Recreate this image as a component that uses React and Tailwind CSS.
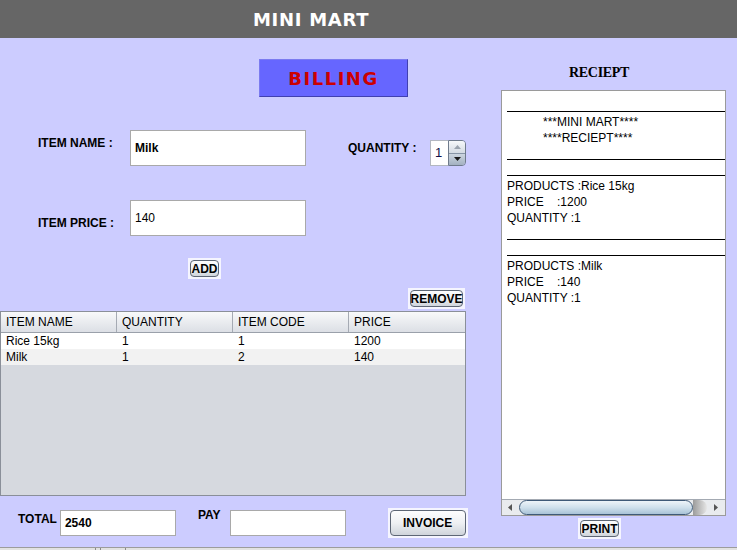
import React from 'react';

const FONT = "font-['Liberation_Sans',Arial,sans-serif]";

const ITEMS = [
  { name: 'Rice 15kg', qty: 1, code: 1, price: 1200 },
  { name: 'Milk', qty: 1, code: 2, price: 140 },
];

function SwingButton({ label, className = '' }) {
  return (
    <div className={`bg-white/80 p-[2px] ${className}`}>
      <button className="w-full h-full rounded-[4px] border border-[#5d6675] bg-linear-to-b from-[#fdfdfe] via-[#eef0f3] to-[#cfd4db] text-[12px] font-bold text-black leading-none flex items-center justify-center">
        {label}
      </button>
    </div>
  );
}

function Label({ children, className = '' }) {
  return <div className={`text-[12px] font-bold text-black leading-[14px] whitespace-nowrap ${className}`}>{children}</div>;
}

function Spinner() {
  return (
    <div className="flex h-[26px] mt-[10px]">
      <div className="w-[18px] bg-white border border-[#b3b8c1] border-r-0 text-[13px] text-[#10104a] flex items-center pl-[4px]">1</div>
      <div className="w-[18px] flex flex-col rounded-r-[4px] border border-[#6f7b8c] overflow-hidden">
        <div className="flex-1 bg-linear-to-b from-[#f6f8fa] to-[#d4dbe3] border-b border-[#8795a6] flex items-center justify-center">
          <svg width="7" height="4" viewBox="0 0 7 4"><path d="M3.5 0 L7 4 L0 4 Z" fill="#9aa3ae" /></svg>
        </div>
        <div className="flex-1 bg-linear-to-b from-[#cdd6e0] to-[#a3b1c1] flex items-center justify-center">
          <svg width="7" height="4" viewBox="0 0 7 4"><path d="M0 0 L7 0 L3.5 4 Z" fill="#1a1a1a" /></svg>
        </div>
      </div>
    </div>
  );
}

function ItemTable() {
  const cols = ['ITEM NAME', 'QUANTITY', 'ITEM CODE', 'PRICE'];
  return (
    <div className="mt-[2px] w-[466px] h-[185px] border border-[#8a8f99] bg-[#d6d9df] flex flex-col">
      <div className="grid grid-cols-4 h-[21px] bg-linear-to-b from-[#f8f9fa] to-[#dcdfe5] border-b border-[#9aa0aa]">
        {cols.map((c, i) => (
          <div key={c} className={`flex items-center pl-[5px] text-[12px] text-black ${i < 3 ? 'border-r border-[#a5aab3]' : ''}`}>{c}</div>
        ))}
      </div>
      {ITEMS.map((it, i) => (
        <div key={it.code} className={`grid grid-cols-4 h-[16px] text-[12px] leading-[16px] text-black ${i % 2 === 0 ? 'bg-white' : 'bg-[#f2f2f2]'}`}>
          <div className="pl-[5px]">{it.name}</div>
          <div className="pl-[5px]">{it.qty}</div>
          <div className="pl-[5px]">{it.code}</div>
          <div className="pl-[5px]">{it.price}</div>
        </div>
      ))}
    </div>
  );
}

// underscore line drawn across the receipt text area
function Rule() {
  return (
    <div className="h-[16px] pt-[13px]">
      <div className="ml-[5px] w-[240px] h-px bg-black" />
    </div>
  );
}

function Line({ text, indent = false }) {
  return (
    <div className={`h-[16px] leading-[16px] text-[12px] text-black whitespace-pre ${indent ? 'pl-[41px]' : 'pl-[5px]'}`}>{text}</div>
  );
}

function Receipt() {
  return (
    <div className="ml-[21px] mt-[9px] w-[225px] h-[426px] border border-[#9a9a9a] bg-white flex flex-col">
      <div className="flex-1 overflow-hidden pt-[7px]">
        <Rule />
        <Line text="***MINI MART****" indent />
        <Line text="****RECIEPT****" indent />
        <Rule />
        <Rule />
        <Line text="PRODUCTS :Rice 15kg" />
        <Line text="PRICE    :1200" />
        <Line text="QUANTITY :1" />
        <Rule />
        <Rule />
        <Line text="PRODUCTS :Milk" />
        <Line text="PRICE    :140" />
        <Line text="QUANTITY :1" />
      </div>
      <div className="h-[16px] bg-[#e9ebee] border-t border-[#a3a9b2] flex items-center">
        <div className="w-[15px] flex items-center justify-center">
          <svg width="4" height="7" viewBox="0 0 4 7"><path d="M4 0 L4 7 L0 3.5 Z" fill="#555" /></svg>
        </div>
        <div className="ml-[2px] w-[174px] h-[15px] rounded-full border border-[#3f5a78] bg-linear-to-b from-[#eef4f9] via-[#cfe0ec] to-[#a9c3d7]" />
        <div className="w-[14px] h-[15px] rounded-r-full bg-linear-to-r from-[#9c9c9c] to-[#e6e6e6]" />
        <div className="flex-1 flex items-center justify-center">
          <svg width="4" height="7" viewBox="0 0 4 7"><path d="M0 0 L4 3.5 L0 7 Z" fill="#555" /></svg>
        </div>
      </div>
    </div>
  );
}

export default function App() {
  return (
    <div className={`w-[737px] h-[550px] bg-[#ccccff] flex flex-col overflow-hidden ${FONT}`}>
      <div className="h-[38px] bg-[#666666] flex items-center pl-[253px]">
        <span className="font-['DejaVu_Sans',sans-serif] font-bold text-[18px] tracking-[0.7px] text-white">MINI MART</span>
      </div>

      <div className="flex-1 flex">
        <div className="w-[480px] flex flex-col">
          <div className="mt-[21px] ml-[259px] w-[149px] h-[38px] bg-[#6666ff] border border-[#7b7bf0] border-b-[#4040b0] border-r-[#4040b0] flex items-center justify-center">
            <span className="font-['DejaVu_Sans',sans-serif] font-bold text-[18px] tracking-[1.5px] text-[#cc0000]">BILLING</span>
          </div>

          <div className="mt-[33px] flex items-start">
            <Label className="ml-[38px] mt-[6px] w-[92px]">ITEM NAME :</Label>
            <div className="w-[176px] h-[36px] bg-white border border-[#a9a9a9] flex items-center pl-[4px] text-[12px] font-bold text-black">Milk</div>
            <Label className="ml-[42px] mt-[11px] w-[82px]">QUANTITY :</Label>
            <Spinner />
          </div>

          <div className="mt-[34px] flex items-start">
            <Label className="ml-[38px] mt-[16px] w-[92px]">ITEM PRICE :</Label>
            <div className="w-[176px] h-[36px] bg-white border border-[#a9a9a9] flex items-center pl-[4px] text-[12px] text-black">140</div>
          </div>

          <SwingButton label="ADD" className="mt-[22px] ml-[188px] w-[33px] h-[21px]" />
          <SwingButton label="REMOVE" className="mt-[9px] ml-[408px] w-[57px] h-[21px]" />

          <ItemTable />

          <div className="mt-[12px] flex items-start">
            <Label className="ml-[18px] mt-[4px]">TOTAL</Label>
            <div className="ml-[3px] mt-[2px] w-[116px] h-[26px] bg-white border border-[#a9a9a9] flex items-center pl-[4px] text-[12px] font-bold text-black">2540</div>
            <Label className="ml-[22px]">PAY</Label>
            <div className="ml-[9px] mt-[2px] w-[116px] h-[26px] bg-white border border-[#a9a9a9]" />
            <SwingButton label="INVOICE" className="ml-[42px] w-[80px] h-[30px]" />
          </div>
        </div>

        <div className="flex-1 flex flex-col">
          <div className="mt-[27px] ml-[89px] h-[16px] leading-[16px] font-['Liberation_Serif',serif] font-bold text-[14px] tracking-[-0.3px] text-black">RECIEPT</div>
          <Receipt />
          <SwingButton label="PRINT" className="mt-[2px] ml-[98px] w-[43px] h-[21px]" />
        </div>
      </div>

      <div className="h-[3px] border-t border-[#9c9c9c] bg-[#e2e2e2] flex">
        <div className="ml-[95px] w-[6px] border-x border-[#8a8a8a]" />
        <div className="ml-[24px] w-px bg-[#8a8a8a]" />
      </div>
    </div>
  );
}
